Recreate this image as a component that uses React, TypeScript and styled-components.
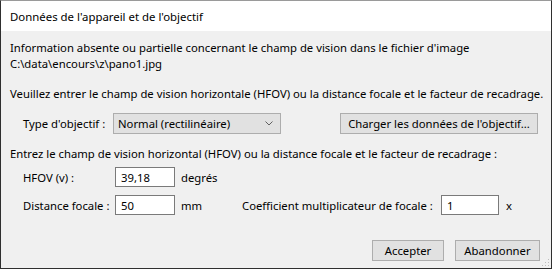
import React from "react";
import styled, { createGlobalStyle } from "styled-components";

const Global = createGlobalStyle`
  html, body { margin: 0; padding: 0; background: #ffffff; }
  body { font-family: "Noto Sans", "Open Sans", sans-serif; font-size: 11.3px; color: #000; }
`;

const Window = styled.div`
  width: 552px;
  height: 269px;
  box-sizing: border-box;
  border: 1px solid #2f2f2f;
  border-top-color: #9a9a9a;
  background: #f0f0f0;
  display: flex;
  flex-direction: column;
  position: relative;
  overflow: hidden;
`;

const TitleBar = styled.div`
  height: 30px;
  background: #ffffff;
  display: flex;
  align-items: center;
  padding-left: 9px;
  font-size: 11.4px;
  flex-shrink: 0;
`;

const Body = styled.div`
  display: flex;
  flex-direction: column;
  padding: 9px 10px 0 9px;
`;

const Text = styled.div<{ $mt?: number }>`
  line-height: 16px;
  height: 16px;
  white-space: nowrap;
  margin-top: ${(p) => p.$mt ?? 0}px;
`;

const Row = styled.div<{ $mt: number; $h: number; $indent: number }>`
  display: flex;
  align-items: center;
  height: ${(p) => p.$h}px;
  margin-top: ${(p) => p.$mt}px;
  padding-left: ${(p) => p.$indent}px;
  white-space: nowrap;
`;

const Label = styled.span<{ $w?: number }>`
  display: inline-block;
  width: ${(p) => (p.$w ? `${p.$w}px` : "auto")};
  flex-shrink: 0;
`;

const Combo = styled.div`
  box-sizing: border-box;
  width: 168px;
  height: 21px;
  background: #e1e1e1;
  border: 1px solid #adadad;
  display: flex;
  align-items: center;
  justify-content: space-between;
  padding: 0 7px 0 4px;
`;

const Button = styled.div<{ $w: number; $ml?: number }>`
  box-sizing: border-box;
  width: ${(p) => p.$w}px;
  height: 21px;
  margin-left: ${(p) => p.$ml ?? 0}px;
  background: #e1e1e1;
  border: 1px solid #adadad;
  display: flex;
  align-items: center;
  justify-content: center;
  flex-shrink: 0;
`;

const Input = styled.div<{ $w: number }>`
  box-sizing: border-box;
  width: ${(p) => p.$w}px;
  height: 20px;
  background: #ffffff;
  border: 1px solid #7a7a7a;
  display: flex;
  align-items: center;
  padding-left: 5px;
  flex-shrink: 0;
`;

const Unit = styled.span<{ $ml: number; $w?: number }>`
  margin-left: ${(p) => p.$ml}px;
  display: inline-block;
  width: ${(p) => (p.$w ? `${p.$w}px` : "auto")};
  flex-shrink: 0;
`;

const Footer = styled.div`
  display: flex;
  justify-content: flex-end;
  margin-top: 25px;
  padding-right: 1px;
`;

const Grip = styled.svg`
  position: absolute;
  right: 1px;
  bottom: 1px;
`;

export default function App() {
  return (
    <>
      <Global />
      <Window>
        <TitleBar>Données de l'appareil et de l'objectif</TitleBar>
        <Body>
          <Text>Information absente ou partielle concernant le champ de vision dans le fichier d'image</Text>
          <Text>C:\data\encours\z\pano1.jpg</Text>
          <Text $mt={14}>Veuillez entrer le champ de vision horizontale (HFOV) ou la distance focale et le facteur de recadrage.</Text>
          <Row $mt={11} $h={21} $indent={13}>
            <Label $w={90}>Type d'objectif :</Label>
            <Combo>
              <span>Normal (rectilinéaire)</span>
              <svg width="8" height="5" viewBox="0 0 8 5">
                <path d="M0.5 0.5 L4 4 L7.5 0.5" fill="none" stroke="#606060" strokeWidth="1" />
              </svg>
            </Combo>
            <Button $w={198} $ml={59}>Charger les données de l'objectif...</Button>
          </Row>
          <Text $mt={12}>Entrez le champ de vision horizontal (HFOV) ou la distance focale et le facteur de recadrage :</Text>
          <Row $mt={5} $h={20} $indent={13}>
            <Label $w={92}>HFOV (v) :</Label>
            <Input $w={60}>39,18</Input>
            <Unit $ml={6}>degrés</Unit>
          </Row>
          <Row $mt={8} $h={20} $indent={13}>
            <Label $w={92}>Distance focale :</Label>
            <Input $w={60}>50</Input>
            <Unit $ml={6} $w={61}>mm</Unit>
            <Label $w={199}>Coefficient multiplicateur de focale :</Label>
            <Input $w={58}>1</Input>
            <Unit $ml={7}>x</Unit>
          </Row>
          <Footer>
            <Button $w={72}>Accepter</Button>
            <Button $w={85} $ml={11}>Abandonner</Button>
          </Footer>
        </Body>
        <Grip width="10" height="10" viewBox="0 0 10 10">
          {[[8, 2], [8, 5], [5, 5], [8, 8], [5, 8], [2, 8]].map(([x, y], i) => (
            <rect key={i} x={x} y={y} width="1" height="1" fill="#bcbcbc" />
          ))}
        </Grip>
      </Window>
    </>
  );
}
